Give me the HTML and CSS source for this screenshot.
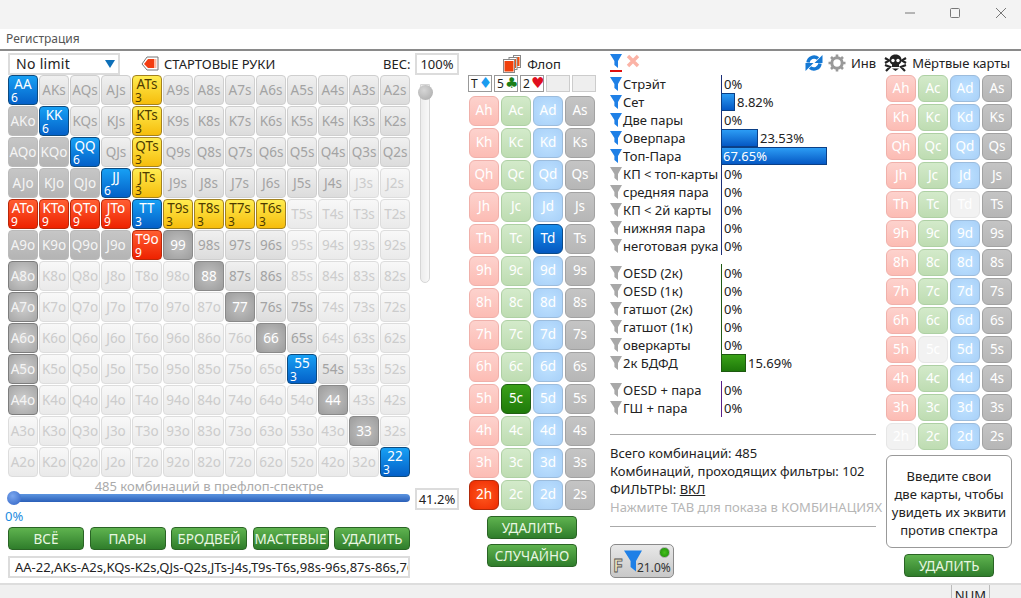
FILE: index.html
```html
<!DOCTYPE html>
<html lang="en">
<head>
    <meta charset="UTF-8" />
    <meta name="viewport" content="width=device-width, initial-scale=1" />
    <title>Регистрация</title>
    <link rel="stylesheet" href="styles.css">
</head>
<body>

<svg class="defs" width="0" height="0" aria-hidden="true">
    <symbol id="funnel" viewBox="0 0 12 14">
        <path d="M0 0H12L8 7V14L4.4 11V7Z" />
    </symbol>
</svg>

<div class="titlebar">
    <svg class="win-icon" width="120" height="12" viewBox="0 0 120 12" aria-hidden="true">
        <path d="M12 6H22" />
        <rect x="57.5" y="1.5" width="9" height="9" rx="1" />
        <path d="M103 1L113 11M113 1L103 11" />
    </svg>
</div>
<div class="menubar">Регистрация</div>

<div class="app">
    <section class="hands-panel">
        <div class="hands-top">
            <div class="select">No limit<span class="select-arrow"></span></div>
            <svg class="tag-icon" width="18" height="16" viewBox="0 0 18 16" aria-hidden="true">
                <path d="M6 1H17V14H6L1 8Z" fill="#fff" stroke="#777" />
                <path d="M7 3H13V12H7L3 8Z" fill="#f33c10" />
                <rect x="13" y="3" width="2.4" height="9" fill="#ffb7a0" />
            </svg>
            <span class="hands-title">СТАРТОВЫЕ РУКИ</span>
            <span class="weight-label">ВЕС:</span>
            <div class="field weight-field">100%</div>
        </div>
        <div class="hands-main">
            <div class="hands-grid" id="handsGrid"></div>
            <div class="vslider"><span class="vslider-thumb"></span></div>
        </div>
        <div class="range-note">485 комбинаций в префлоп-спектре</div>
        <div class="range-row">
            <div class="hslider"><span class="hslider-thumb"></span></div>
            <div class="field range-field">41.2%</div>
        </div>
        <div class="range-min">0%</div>
        <div class="range-buttons">
            <button class="green-btn">ВСЁ</button>
            <button class="green-btn">ПАРЫ</button>
            <button class="green-btn">БРОДВЕЙ</button>
            <button class="green-btn">МАСТЕВЫЕ</button>
            <button class="green-btn">УДАЛИТЬ</button>
        </div>
        <div class="range-text">AA-22,AKs-A2s,KQs-K2s,QJs-Q2s,JTs-J4s,T9s-T6s,98s-96s,87s-86s,76s-75s,65s,54s</div>
    </section>

    <section class="flop-panel">
        <div class="flop-head">
            <svg width="18" height="18" viewBox="0 0 18 18" aria-hidden="true">
                <rect x="10.5" y="0.5" width="7" height="12" fill="#fff" stroke="#888" />
                <rect x="11.5" y="2" width="5" height="9" fill="#f4500f" />
                <rect x="6" y="2.5" width="8" height="12" fill="#fff" stroke="#888" />
                <rect x="7" y="4" width="6" height="9" fill="#f4500f" />
                <rect x="0.5" y="4.5" width="11" height="13" fill="#fff" stroke="#888" />
                <rect x="1.5" y="6" width="9" height="10.5" fill="#f0400c" />
            </svg>
            <span>Флоп</span>
        </div>
        <div class="board">
            <div class="board-card">T<span class="suit suit-d">♦</span></div>
            <div class="board-card">5<span class="suit suit-c">♣</span></div>
            <div class="board-card">2<span class="suit suit-h">♥</span></div>
            <div class="board-card board-empty"></div>
            <div class="board-card board-empty"></div>
        </div>
        <div class="deck deck-flop" id="flopDeck"></div>
        <button class="green-btn wide-btn">УДАЛИТЬ</button>
        <button class="green-btn wide-btn">СЛУЧАЙНО</button>
    </section>

    <section class="filter-panel">
        <div class="filter-top">
            <span class="funnel-off">
                <svg class="funnel blue" width="12" height="14"><use href="#funnel" /></svg>
            </span>
            <svg width="14" height="14" viewBox="0 0 14 14" aria-hidden="true">
                <path d="M2 2L12 12M12 2L2 12" stroke="#fbb3a6" stroke-width="3.4" />
            </svg>
        </div>
        <div class="filter-group group-made" id="groupMade"></div>
        <div class="filter-group group-draw" id="groupDraw"></div>
        <div class="filter-group group-combo" id="groupCombo"></div>
        <div class="summary">
            <div>Всего комбинаций: 485</div>
            <div>Комбинаций, проходящих фильтры: 102</div>
            <div>ФИЛЬТРЫ: <u>ВКЛ</u></div>
            <div class="summary-hint">Нажмите TAB для показа в КОМБИНАЦИЯХ</div>
        </div>
        <div class="f-button">
            <span class="f-letter">F</span>
            <svg class="funnel blue f-funnel" width="18" height="22"><use href="#funnel" /></svg>
            <span class="f-value">21.0%</span>
            <span class="f-led"></span>
        </div>
    </section>

    <section class="dead-panel">
        <div class="dead-head">
            <svg width="18" height="18" viewBox="0 0 18 18" aria-hidden="true">
                <path d="M3 8.5A6 6 0 0 1 13 4.6" fill="none" stroke="#1478d4" stroke-width="3.4" />
                <path d="M15 9.5A6 6 0 0 1 5 13.4" fill="none" stroke="#1478d4" stroke-width="3.4" />
                <path d="M17.5 1V9H9.5Z" fill="#1478d4" />
                <path d="M0.5 17V9H8.5Z" fill="#1478d4" />
            </svg>
            <svg class="gear" width="18" height="18" viewBox="0 0 18 18" aria-hidden="true">
                <circle cx="9" cy="9" r="5.2" fill="none" stroke="#999" stroke-width="3" />
                <path d="M9 0.5V3.5M9 14.5V17.5M0.5 9H3.5M14.5 9H17.5M3 3L5.2 5.2M12.8 12.8L15 15M15 3L12.8 5.2M5.2 12.8L3 15" stroke="#999" stroke-width="2.6" />
            </svg>
            <span class="inv-label">Инв</span>
            <svg class="skull" width="23" height="18" viewBox="0 0 23 18" aria-hidden="true">
                <path d="M1 4L5 6.5L1 9M22 4L18 6.5L22 9M1 11L6 13L2 17M22 11L17 13L21 17" stroke="#222" stroke-width="2.2" fill="none" />
                <path d="M11.5 0.5C7.5 0.5 5.5 3 5.5 6C5.5 8.5 6.6 9.6 8 10.4V13H15V10.4C16.4 9.6 17.5 8.5 17.5 6C17.5 3 15.5 0.5 11.5 0.5Z" fill="#222" />
                <circle cx="9" cy="6.5" r="1.7" fill="#fff" />
                <circle cx="14" cy="6.5" r="1.7" fill="#fff" />
                <path d="M8 14.5L15 14.5L11.5 17Z" fill="#222" />
            </svg>
            <span>Мёртвые карты</span>
        </div>
        <div class="deck deck-dead" id="deadDeck"></div>
        <div class="equity-note">Введите свои<br>две карты, чтобы<br>увидеть их эквити<br>против спектра</div>
        <button class="green-btn wide-btn dead-btn">УДАЛИТЬ</button>
    </section>
</div>

<div class="statusbar"><span class="status-cell">NUM</span></div>

<script src="script.js"></script>
</body>
</html>
```

FILE: styles.css
```css
html, body {
  margin: 0;
  height: 100%;
}
body {
  width: 1021px;
  height: 598px;
  overflow: hidden;
  background: #fff;
  color: #222;
  font-family: 'Noto Sans', 'Open Sans', sans-serif;
  font-size: 13px;
  display: flex;
  flex-direction: column;
}
.defs {
  position: absolute;
}
.titlebar {
  height: 29px;
  flex: none;
  background: #f3f3f3;
  display: flex;
  justify-content: flex-end;
}
.win-icon {
  margin: 7px 8px 0 0;
  fill: none;
  stroke: #777;
}
.menubar {
  height: 20px;
  flex: none;
  padding-left: 6px;
  font-size: 12px;
  line-height: 20px;
  color: #555;
  border-bottom: 2px solid #8a8a8a;
}
.app {
  flex: 1;
  display: flex;
  min-height: 0;
}

/* start hands */
.hands-panel {
  width: 451px;
  margin-left: 8px;
  flex: none;
}
.hands-top {
  height: 22px;
  margin-top: 2px;
  display: flex;
  align-items: center;
}
.select {
  width: 102px;
  height: 18px;
  border: 2px solid #dcdcdc;
  padding-left: 6px;
  line-height: 18px;
  font-size: 14px;
  margin-right: 21px;
  position: relative;
  letter-spacing: 0.3px;
}
.select-arrow {
  position: absolute;
  right: 3px;
  top: 5px;
  border-left: 5px solid transparent;
  border-right: 5px solid transparent;
  border-top: 8px solid #0d6fb8;
}
.tag-icon {
  margin-right: 5px;
}
.hands-title {
  width: 219px;
  color: #222;
}
.field {
  border: 2px solid #dcdcdc;
  background: #fff;
  text-align: center;
  color: #222;
}
.weight-label {
  width: 32px;
}
.weight-field {
  width: 40px;
  height: 18px;
  line-height: 18px;
}
.hands-main {
  display: flex;
}
.hands-grid {
  display: grid;
  grid-template-columns: repeat(13, 30px);
  grid-auto-rows: 30px;
  gap: 1px;
}
.hand {
  box-sizing: border-box;
  border: 1px solid #ddd;
  border-radius: 4px;
  background: linear-gradient(#f8f8f8, #eaeaea);
  color: #ccc;
  font-size: 13.5px;
  line-height: 28px;
  text-align: center;
  white-space: nowrap;
}
.hand.light {
  border-color: #cfcfcf;
  background: linear-gradient(#f0f0f0, #dcdcdc);
  color: #a3a3a3;
}
.hand.mid {
  border-color: #bbb;
  background: linear-gradient(#c6c6c6, #b4b4b4);
  color: #f4f4f4;
}
.hand.edge {
  border-color: #7d7d7d;
  background: radial-gradient(circle, #cfcfcf, #a5a5a5);
  color: #f4f4f4;
}
.hand.pair {
  border-color: #8a8a8a;
  background: radial-gradient(circle, #c2c2c2, #9c9c9c);
  color: #fff;
}
.hand.count {
  line-height: 13px;
  display: flex;
  flex-direction: column;
  padding-top: 2px;
}
.hand.count small {
  font-size: 12px;
  line-height: 13px;
  text-align: left;
  padding-left: 2px;
}
.hand.blue {
  border-color: #0d4b80;
  background: linear-gradient(#17a0f4, #0460c8);
  color: #fff;
}
.hand.yellow {
  border-color: #a3821f;
  background: linear-gradient(#ffec50, #f6bd0c);
  color: #4d3b00;
}
.hand.red {
  border-color: #b9280a;
  background: linear-gradient(#ff5e32, #ee2200);
  color: #fff;
}
.vslider {
  width: 10px;
  height: 199px;
  margin: 9px 0 0 10px;
  border: 1px solid #d6d6d6;
  box-sizing: border-box;
  border-radius: 0 0 5px 5px;
  background: linear-gradient(90deg, #ececec, #f8f8f8);
  position: relative;
}
.vslider-thumb {
  position: absolute;
  left: -3px;
  top: 0;
  width: 15px;
  height: 15px;
  border-radius: 50%;
  background: radial-gradient(circle at 40% 35%, #d6d6d6, #a8a8a8);
}
.range-note {
  width: 402px;
  margin-top: 2px;
  height: 15px;
  line-height: 15px;
  text-align: center;
  color: #aaa;
}
.range-row {
  height: 22px;
  display: flex;
  align-items: center;
  margin-top: -6px;
}
.hslider {
  width: 402px;
  height: 8px;
  margin: 0 5px 2px 0;
  border-radius: 4px;
  background: linear-gradient(#5c95e0, #2a5fb8);
  position: relative;
}
.hslider-thumb {
  position: absolute;
  left: -1px;
  top: -3px;
  width: 14px;
  height: 14px;
  border-radius: 50%;
  background: radial-gradient(circle at 40% 35%, #7aa6ee, #2f62c4);
}
.range-field {
  width: 40px;
  height: 18px;
  line-height: 18px;
}
.range-min {
  height: 16px;
  line-height: 16px;
  margin: -2px 0 0 -3px;
  color: #1c8ce0;
}
.range-buttons {
  width: 402px;
  margin-top: 3px;
  display: flex;
  justify-content: space-between;
}
.green-btn {
  width: 76px;
  height: 23px;
  padding: 0;
  border: 1px solid #2a6425;
  border-radius: 4px;
  background: linear-gradient(#5fb34f, #2f7d2b);
  color: #e9f7e2;
  font-family: inherit;
  font-size: 13.5px;
  white-space: nowrap;
}
.range-text {
  width: 402px;
  height: 22px;
  margin-top: 6px;
  border: 2px solid #dcdcdc;
  box-sizing: border-box;
  padding-left: 5px;
  line-height: 18px;
  overflow: hidden;
  white-space: nowrap;
}

/* flop */
.flop-panel {
  width: 128px;
  margin-left: 9px;
  flex: none;
  display: flex;
  flex-direction: column;
  align-items: center;
}
.flop-head {
  height: 22px;
  margin-top: 2px;
  display: flex;
  align-items: center;
  gap: 6px;
}
.board {
  display: flex;
  gap: 2px;
}
.board-card {
  box-sizing: border-box;
  width: 24px;
  height: 17px;
  border: 1px solid #999;
  background: #fff;
  font-size: 12px;
  line-height: 15px;
  padding-left: 2px;
  white-space: nowrap;
  display: flex;
  overflow: hidden;
}
.board-empty {
  border-color: #ccc;
  background: #eee;
}
.suit {
  font-family: 'DejaVu Sans', sans-serif;
  font-size: 15px;
  margin-left: 1px;
}
.suit-d { color: #1a9cf0; }
.suit-c { color: #1a7f1a; }
.suit-h { color: #e0101e; }
.deck {
  display: grid;
  grid-template-columns: repeat(4, 30px);
  gap: 2px;
}
.deck-flop {
  margin-top: 4px;
  grid-auto-rows: 30px;
}
.deck-dead {
  margin-top: 1px;
  grid-auto-rows: 27px;
}
.card {
  box-sizing: border-box;
  border: 1px solid;
  border-radius: 6px;
  color: #fff;
  font-size: 13.5px;
  text-align: center;
  line-height: 26px;
}
.deck-dead .card {
  line-height: 24px;
}
.card.h {
  border-color: #f0b0aa;
  background: linear-gradient(#fdd2cd, #fcbcb4);
}
.card.c {
  border-color: #aed0a4;
  background: linear-gradient(#d3eaca, #bedcb2);
}
.card.d {
  border-color: #9cbcdc;
  background: radial-gradient(circle, #bfe2ff, #a8d0f8);
}
.card.s {
  border-color: #a2a2a2;
  background: linear-gradient(#c4c4c4, #b6b6b6);
}
.card.off {
  border-color: #e6e6e6;
  background: #f2f2f2;
}
.card.on.h {
  border-color: #b02a0a;
  background: radial-gradient(circle, #ff5a20, #ee2a00);
}
.card.on.c {
  border-color: #1f5f12;
  background: linear-gradient(#3aa018, #1f7a0a);
}
.card.on.d {
  border-color: #0b4a88;
  background: linear-gradient(#1a90ee, #0458c0);
}
.wide-btn {
  width: 90px;
  flex: none;
  margin-top: 5px;
}
.deck-flop + .wide-btn {
  margin-top: 6px;
}

/* filters */
.filter-panel {
  width: 270px;
  margin-left: 14px;
  flex: none;
}
.filter-top {
  height: 21px;
  margin-top: 3px;
  display: flex;
  gap: 4px;
}
.funnel-off {
  height: 16px;
  border-bottom: 2px solid #e01010;
  display: block;
}
.funnel {
  display: block;
  fill: #a8a8a8;
}
.funnel.blue {
  fill: #1f80e6;
}
.filter-group {
  margin-top: 9px;
}
.group-made {
  margin-top: 0;
}
.filter-row {
  height: 18px;
  display: flex;
  align-items: center;
  white-space: nowrap;
}
.filter-row .funnel {
  width: 12px;
  flex: none;
  margin-right: 1px;
}
.filter-name {
  width: 98px;
  flex: none;
  overflow: visible;
}
.filter-bar {
  height: 18px;
  border-left: 1px solid #1c2f78;
  display: flex;
  align-items: center;
}
.group-draw .filter-bar { border-left-color: #1f5a14; }
.group-combo .filter-bar { border-left-color: #5a1f88; }
.bar-fill {
  box-sizing: border-box;
  height: 18px;
  border: 1px solid #0b3f86;
  background: linear-gradient(#2c9cf4, #0558c4);
  color: #fff;
  line-height: 16px;
  padding-left: 1px;
  margin-left: -1px;
}
.group-draw .bar-fill {
  border-color: #1d5a10;
  background: linear-gradient(#3aa218, #1e780a);
}
.filter-value {
  margin-left: 2px;
}
.summary {
  margin-top: 17px;
  padding: 9px 0 10px;
  width: 266px;
  border-top: 1px solid #aaa;
  border-bottom: 1px solid #aaa;
  line-height: 18px;
  white-space: nowrap;
}
.summary-hint {
  color: #b6b6b6;
}
.f-button {
  box-sizing: border-box;
  width: 64px;
  height: 34px;
  margin-top: 17px;
  border: 1px solid #8a8a8a;
  border-radius: 5px;
  background: linear-gradient(#e8e8e8, #c8c8c8);
  position: relative;
}
.f-letter {
  position: absolute;
  left: 2px;
  bottom: 2px;
  font-size: 18px;
  line-height: 20px;
  font-weight: 700;
  color: #efe4c0;
  -webkit-text-stroke: 0.8px #555;
}
.f-funnel {
  position: absolute;
  left: 13px;
  top: 5px;
  width: 18px;
  height: 22px;
}
.f-value {
  position: absolute;
  left: 26px;
  bottom: 2px;
  font-size: 12px;
  line-height: 14px;
  color: #333;
}
.f-led {
  position: absolute;
  right: 3px;
  top: 2px;
  width: 9px;
  height: 9px;
  border: 1px solid #aaa;
  border-radius: 50%;
  background: radial-gradient(circle, #46c01c, #198a08);
}

/* dead cards */
.dead-panel {
  width: 134px;
  flex: none;
  display: flex;
  flex-direction: column;
  align-items: flex-end;
}
.dead-head {
  height: 22px;
  width: 209px;
  margin-top: 1px;
  display: flex;
  align-items: center;
  white-space: nowrap;
  flex: none;
}
.dead-head .gear {
  margin-left: 5px;
}
.inv-label {
  margin: 0 8px 0 5px;
}
.skull {
  margin-right: 5px;
}
.equity-note {
  box-sizing: border-box;
  width: 126px;
  height: 93px;
  margin-top: 5px;
  border: 1px solid #999;
  border-radius: 6px;
  text-align: center;
  line-height: 18px;
  padding-top: 11px;
  white-space: nowrap;
  align-self: flex-end;
}
.deck-dead,
.equity-note {
  margin-right: 2px;
}
.dead-btn {
  margin: 6px 20px 0 0;
}
.statusbar {
  height: 13px;
  flex: none;
  background: #f0f0f0;
  border-top: 2px solid #ddd;
  overflow: hidden;
  display: flex;
  justify-content: flex-end;
}
.status-cell {
  height: 20px;
  margin-right: 31px;
  padding: 0 3px;
  border-left: 1px solid #bbb;
  border-right: 1px solid #bbb;
  font-size: 13px;
  line-height: 20px;
  color: #222;
}
```

FILE: script.js
```js
const ranks = 'AKQJT98765432'.split('');
const funnel = on => `<svg class="funnel${on ? ' blue' : ''}" width="12" height="14"><use href="#funnel" /></svg>`;

// combos left on the chart, by hand
const blue = { AA: 6, KK: 6, QQ: 6, JJ: 6, TT: 3, 55: 3, 22: 3 };
const yellow = ['ATs', 'KTs', 'QTs', 'JTs', 'T9s', 'T8s', 'T7s', 'T6s'];
const red = ['ATo', 'KTo', 'QTo', 'JTo', 'T9o'];
const mid = ['AKo', 'AQo', 'KQo', 'AJo', 'KJo', 'QJo', 'A9o', 'K9o', 'Q9o', 'J9o'];
const edge = ['A8o', 'A7o', 'A6o', 'A5o', 'A4o'];
const pairs = ['99', '88', '77', '66', '44', '33'];
const faintSuited = ['J3s', 'J2s', 'T5s', 'T4s', 'T3s', 'T2s'];

function handClass(name, row) {
  if (blue[name]) return 'blue count';
  if (yellow.includes(name)) return 'yellow count';
  if (red.includes(name)) return 'red count';
  if (mid.includes(name)) return 'mid';
  if (edge.includes(name)) return 'edge';
  if (pairs.includes(name)) return 'pair';
  if (!name.endsWith('s') || faintSuited.includes(name)) return '';
  // below the nines only a couple of suited hands are still in range
  if (row < 5) return 'light';
  return ['98s', '97s', '96s', '87s', '86s', '76s', '75s', '65s', '54s'].includes(name) ? 'light' : '';
}

let handsHtml = '';
ranks.forEach((r1, i) => {
  ranks.forEach((r2, j) => {
    let name = r1 + r2;
    if (j > i) name += 's';
    if (j < i) name = r2 + r1 + 'o';
    const cls = handClass(name, i);
    let count = '';
    if (cls.includes('count')) {
      count = `<small>${blue[name] || (yellow.includes(name) ? 3 : 9)}</small>`;
    }
    handsHtml += `<div class="hand ${cls}"><span>${name}</span>${count}</div>`;
  });
});
document.getElementById('handsGrid').innerHTML = handsHtml;

function renderDeck(id, active, off) {
  let html = '';
  ranks.forEach(r => {
    'hcds'.split('').forEach(s => {
      const card = r + s;
      let cls = s;
      if (active.includes(card)) cls += ' on';
      if (off.includes(card)) cls += ' off';
      html += `<div class="card ${cls}">${card}</div>`;
    });
  });
  document.getElementById(id).innerHTML = html;
}
renderDeck('flopDeck', ['Td', '5c', '2h'], []);
renderDeck('deadDeck', [], ['Td', '5c', '2h']);

function renderFilters(id, rows) {
  document.getElementById(id).innerHTML = rows.map(row => {
    const pct = row[1];
    const on = row[2];
    const width = Math.round(pct * 1.57);
    let bar = '<span class="filter-value">0%</span>';
    if (pct > 50) {
      bar = `<div class="bar-fill" style="width:${width}px">${pct}%</div>`;
    } else if (pct > 0) {
      bar = `<div class="bar-fill" style="width:${width}px"></div><span class="filter-value">${pct}%</span>`;
    }
    return `<div class="filter-row">${funnel(on)}<span class="filter-name">${row[0]}</span><div class="filter-bar">${bar}</div></div>`;
  }).join('');
}
renderFilters('groupMade', [
  ['Стрэйт', 0, true],
  ['Сет', 8.82, true],
  ['Две пары', 0, true],
  ['Оверпара', 23.53, true],
  ['Топ-Пара', 67.65, true],
  ['КП &lt; топ-карты', 0],
  ['средняя пара', 0],
  ['КП &lt; 2й карты', 0],
  ['нижняя пара', 0],
  ['неготовая рука', 0]
]);
renderFilters('groupDraw', [
  ['OESD (2к)', 0],
  ['OESD (1к)', 0],
  ['гатшот (2к)', 0],
  ['гатшот (1к)', 0],
  ['оверкарты', 0],
  ['2к БДФД', 15.69]
]);
renderFilters('groupCombo', [
  ['OESD + пара', 0],
  ['ГШ + пара', 0]
]);
```
